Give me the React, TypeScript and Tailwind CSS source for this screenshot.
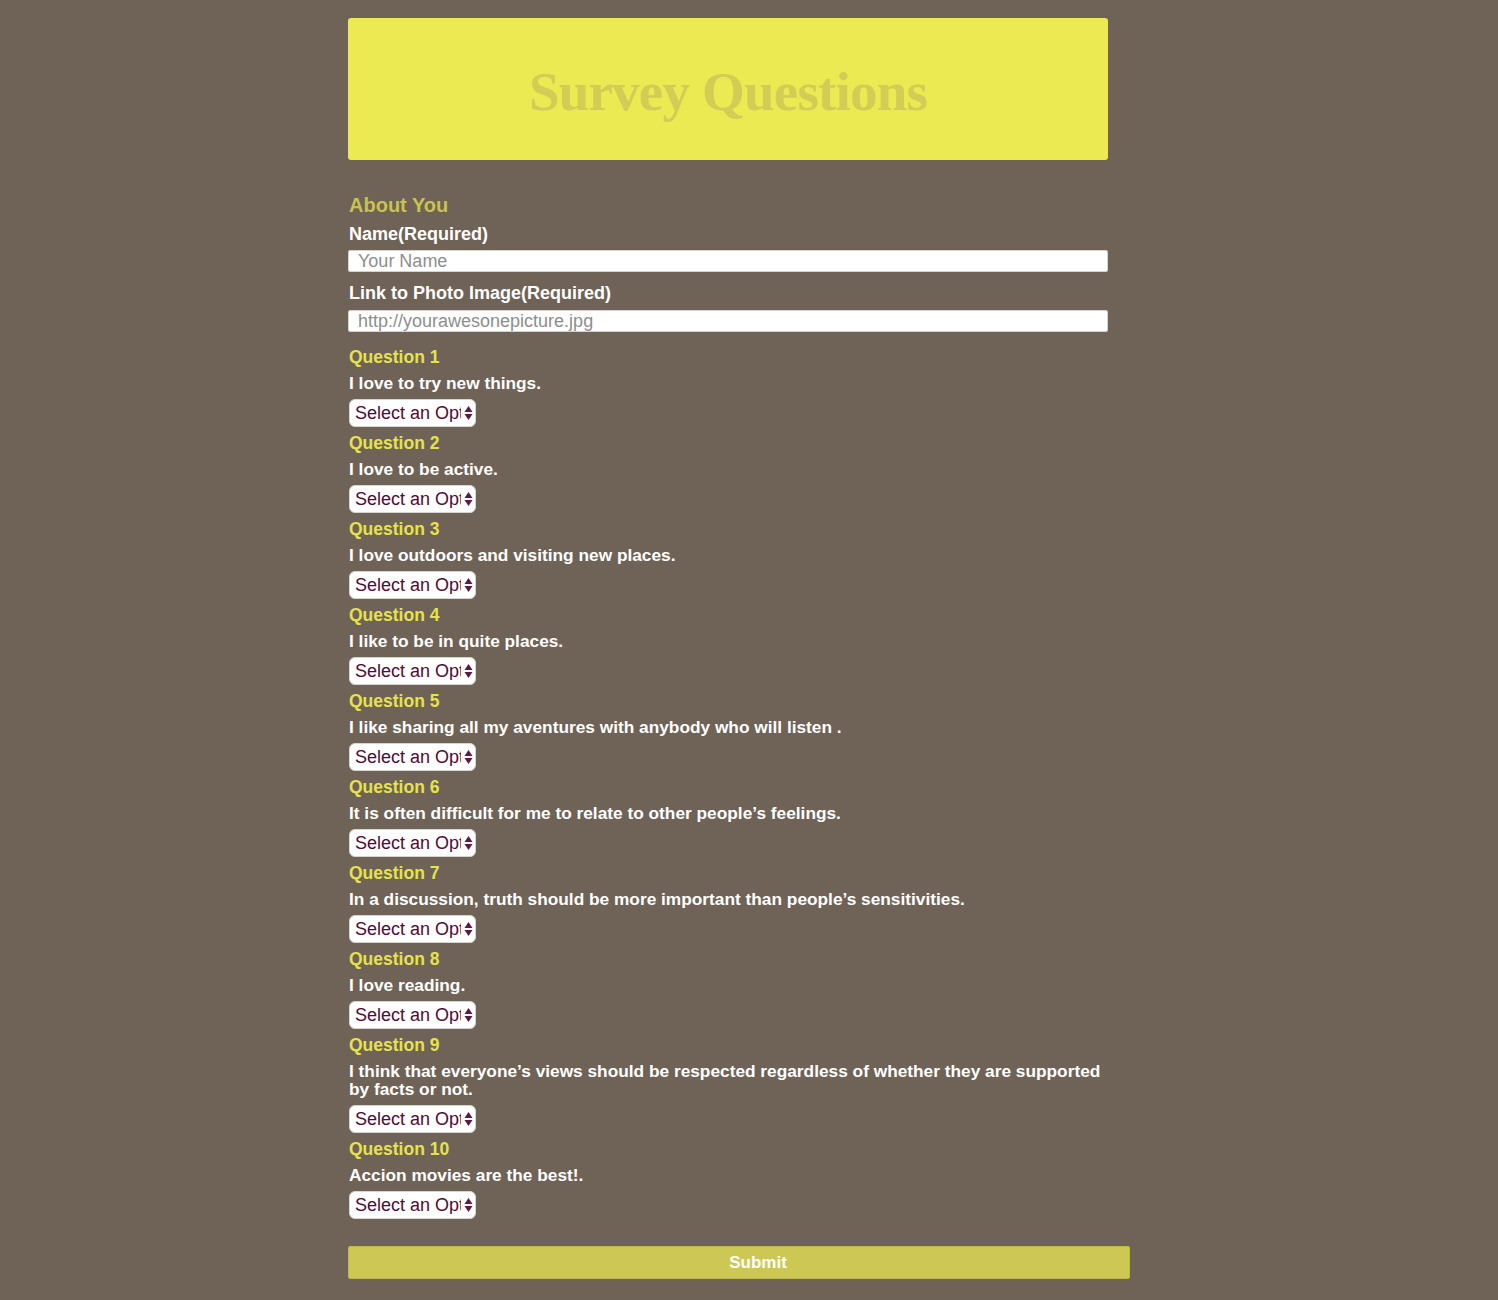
import { useState } from "react";

const questions = [
  "I love to try new things.",
  "I love to be active.",
  "I love outdoors and visiting new places.",
  "I like to be in quite places.",
  "I like sharing all my aventures with anybody who will listen .",
  "It is often difficult for me to relate to other people’s feelings.",
  "In a discussion, truth should be more important than people’s sensitivities.",
  "I love reading.",
  "I think that everyone’s views should be respected regardless of whether they are supported by facts or not.",
  "Accion movies are the best!.",
];

const options = [
  "Select an Option",
  "1 (Strongly Disagree)",
  "2",
  "3",
  "4",
  "5 (Strongly Agree)",
];

function OptionSelect({ name }: { name: string }) {
  const [value, setValue] = useState(options[0]);
  return (
    <div className="relative w-[127px] h-[28px]">
      <select
        name={name}
        value={value}
        onChange={(e) => setValue(e.target.value)}
        className="appearance-none w-full h-full bg-white rounded-[6px] border border-[#d8d4d0] pl-[5px] pr-[14px] text-[18px] leading-none text-[#4e0c36] outline-none overflow-hidden whitespace-nowrap"
        style={{ textOverflow: "clip" }}
      >
        {options.map((o) => (
          <option key={o} value={o}>
            {o}
          </option>
        ))}
      </select>
      <svg
        className="absolute right-[3px] top-[6px] pointer-events-none"
        width="9"
        height="16"
        viewBox="0 0 9 16"
      >
        <path d="M4.5 1 L8.5 7 L0.5 7 Z" fill="#5a1a45" />
        <path d="M0.5 9 L8.5 9 L4.5 15 Z" fill="#5a1a45" />
      </svg>
    </div>
  );
}

export default function App() {
  return (
    <div
      className="min-h-[1300px] bg-[#6f6257] pt-[18px] pb-[21px]"
      style={{ fontFamily: '"Liberation Sans", Arial, sans-serif' }}
    >
      <div className="w-[760px] ml-[348px]">
        <header className="h-[142px] bg-[#ebea52] rounded-[3px] flex items-center justify-center">
          <h1
            className="text-[55px] font-bold text-[#d3cc55] leading-none tracking-[-0.8px] pt-[4px]"
            style={{ fontFamily: '"Liberation Serif", "Times New Roman", serif' }}
          >
            Survey Questions
          </h1>
        </header>

        <form className="pt-[33px] pl-[1px]" onSubmit={(e) => e.preventDefault()}>
          <h2 className="text-[20px] font-bold leading-[24px] text-[#c9c34e]">About You</h2>

          <label className="block mt-[8px] text-[18px] font-bold leading-[18px] text-white">
            Name(Required)
          </label>
          <input
            type="text"
            placeholder="Your Name"
            className="block -ml-[1px] mt-[7px] w-[760px] h-[22px] bg-white rounded-[2px] border border-[#d6d2ce] pl-[9px] text-[18px] leading-none text-[#333] placeholder:text-[#8e8e8e] outline-none"
          />

          <label className="block mt-[12px] text-[18px] font-bold leading-[18px] text-white">
            Link to Photo Image(Required)
          </label>
          <input
            type="text"
            placeholder="http://yourawesonepicture.jpg"
            className="block -ml-[1px] mt-[8px] w-[760px] h-[22px] bg-white rounded-[2px] border border-[#d6d2ce] pl-[9px] text-[18px] leading-none text-[#333] placeholder:text-[#8e8e8e] outline-none"
          />

          <div className="pt-[14px]">
            {questions.map((q, i) => (
              <div key={i} className="pb-[5px]">
                <h3 className="text-[17.5px] font-bold leading-[22px] text-[#e6e24b]">
                  Question {i + 1}
                </h3>
                <p className="mt-[6px] text-[17.3px] font-bold leading-[18px] text-white">
                  {q}
                </p>
                <div className="mt-[7px]">
                  <OptionSelect name={`q${i + 1}`} />
                </div>
              </div>
            ))}
          </div>

          <button
            type="submit"
            className="-ml-[1px] mt-[22px] w-[782px] h-[33px] bg-[#cdc853] border border-[#bdb84a] rounded-[2px] pl-[38px] text-center text-[17px] font-bold text-white"
          >
            Submit
          </button>
        </form>
      </div>
    </div>
  );
}
